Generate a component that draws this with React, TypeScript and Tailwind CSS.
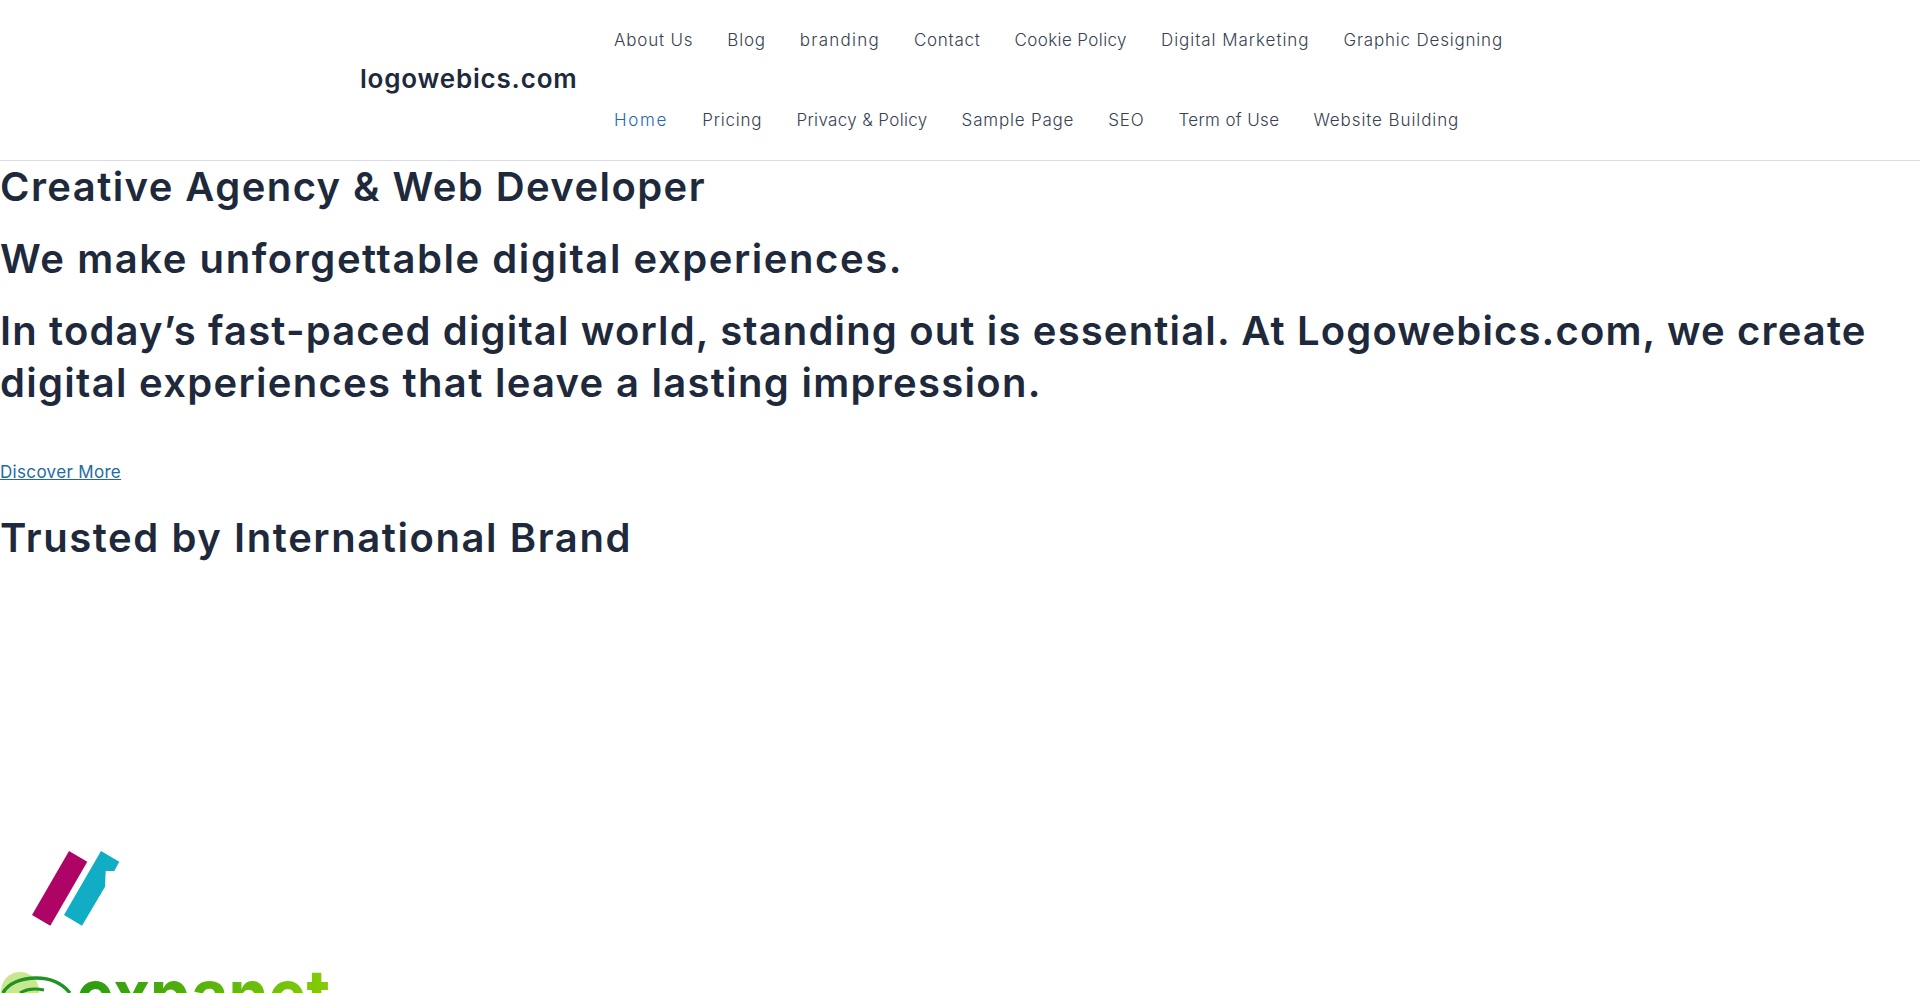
type Item = { t: string; c: string };
const row1: Item[] = [
  { t: "About Us", c: "tracking-[0.8px] text-[#374151]" },
  { t: "Blog", c: "tracking-[0.8px] text-[#374151]" },
  { t: "branding", c: "tracking-[1.25px] text-[#374151]" },
  { t: "Contact", c: "tracking-[0.7px] text-[#374151]" },
  { t: "Cookie Policy", c: "tracking-[0.4px] text-[#374151]" },
  { t: "Digital Marketing", c: "tracking-[0.95px] text-[#374151]" },
  { t: "Graphic Designing", c: "tracking-[0.8px] text-[#374151]" },
];
const row2: Item[] = [
  { t: "Home", c: "tracking-[1.7px] text-[#1e6aa8]" },
  { t: "Pricing", c: "tracking-[0.8px] text-[#374151]" },
  { t: "Privacy & Policy", c: "tracking-[0.35px] text-[#374151]" },
  { t: "Sample Page", c: "tracking-[0.8px] text-[#374151]" },
  { t: "SEO", c: "tracking-[0.8px] text-[#374151]" },
  { t: "Term of Use", c: "tracking-[0.35px] text-[#374151]" },
  { t: "Website Building", c: "tracking-[0.9px] text-[#374151]" },
];
const font = { fontFamily: '"Inter", "Liberation Sans", sans-serif' };

function Row({ items }: { items: Item[] }) {
  return (
    <ul className="flex h-20 items-center gap-[34px] pt-[2px] text-[17px] font-[350]">
      {items.map((i) => (
        <li key={i.t} className={i.c}>
          <a>{i.t}</a>
        </li>
      ))}
    </ul>
  );
}

function BrandMark() {
  return (
    <svg width="130" height="143" viewBox="0 820 130 143" className="block">
      <polygon points="69,851 87.3,861.7 50.3,925.7 32,915" fill="#ad0465" />
      <polygon points="101,851 119.3,861.7 114.3,871 105.7,871 105,886.7 82,925.7 64,915" fill="#10adc4" />
    </svg>
  );
}

function ExpanetLogo() {
  return (
    <svg width="340" height="30" viewBox="0 963 340 30" className="block">
      <defs>
        <linearGradient id="expanetGrad" x1="78" y1="0" x2="330" y2="0" gradientUnits="userSpaceOnUse">
          <stop offset="0" stopColor="#2b9a12" />
          <stop offset="1" stopColor="#86cc06" />
        </linearGradient>
      </defs>
      <circle cx="20" cy="991" r="19" fill="#c9e78f" />
      <path d="M3 993 C8 983 22 978 36 978 C50 978 62 983 70 993" fill="none" stroke="#1f9425" strokeWidth="3.5" />
      <path d="M20 993 C26 989 34 988 44 990" fill="none" stroke="#1f9425" strokeWidth="3" />
      <text x="76" y="1021" fontSize="72" fontWeight="700" fill="url(#expanetGrad)" textLength="254" lengthAdjust="spacingAndGlyphs" fontFamily="Inter, sans-serif">expanet</text>
    </svg>
  );
}

export default function App() {
  return (
    <div className="h-[993px] overflow-hidden bg-white text-[#1e293b]" style={font}>
      <header className="h-[161px] border-b border-[#d9dde3] pl-[360px] flex">
        <div className="w-[254px] flex items-center pb-[4px] text-[26px] font-semibold tracking-[0.8px]">logowebics.com</div>
        <nav>
          <Row items={row1} />
          <Row items={row2} />
        </nav>
      </header>
      <h1 className="text-[40px] leading-[52px] font-semibold tracking-[1.42px]">Creative Agency &amp; Web Developer</h1>
      <h2 className="text-[40px] leading-[52px] font-semibold tracking-[1.56px] mt-[20px]">We make unforgettable digital experiences.</h2>
      <h2 className="text-[40px] leading-[52px] font-semibold tracking-[1.15px] mt-[20px]">In today’s fast-paced digital world, standing out is essential. At Logowebics.com, we create <span className="tracking-[1.29px]">digital experiences that leave a lasting impression.</span></h2>
      <p className="mt-[50px] text-[17px] leading-[26px] tracking-[0.33px]"><a className="text-[#1e6aa8] underline">Discover More</a></p>
      <h2 className="text-[40px] leading-[52px] font-semibold tracking-[1.58px] mt-[27px]">Trusted by International Brand</h2>
      <div className="h-[256px]" />
      <BrandMark />
      <ExpanetLogo />
    </div>
  );
}
